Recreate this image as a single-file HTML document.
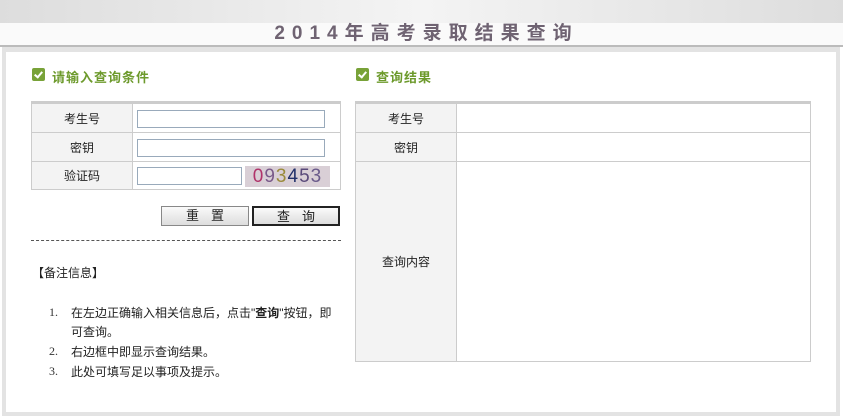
<!DOCTYPE html>
<html><head><meta charset="utf-8"><style>
*{margin:0;padding:0;box-sizing:border-box}
body{width:843px;height:418px;background:#fff;font-family:"Liberation Sans","Noto Sans CJK SC",sans-serif;font-size:12px;color:#222;position:relative;overflow:hidden}
.top{position:absolute;left:0;top:0;width:843px;height:23px;background:linear-gradient(to right,#ddd,#f4f4f4 50%,#ddd)}
.title{position:absolute;left:0;top:23px;width:843px;height:22px;background:#fafafa;text-align:center;font-size:19px;font-weight:bold;color:#6f6372;letter-spacing:7px;line-height:22px;padding-left:10px}
.line{position:absolute;left:0;top:45px;width:843px;height:2px;background:#bbb}
.frame{position:absolute;left:2px;top:47px;width:838px;height:369px;background:#e3e3e3}
.panel{position:absolute;left:6px;top:52px;width:830px;height:360px;background:#fff}
.h{position:absolute;font-size:13px;font-weight:bold;color:#6d9a2c;letter-spacing:1px}
.ck{position:absolute;width:13px;height:13px;background:#78a238;border-radius:2px}
.ck:after{content:"";position:absolute;left:4px;top:2px;width:3px;height:6px;border:solid #fff;border-width:0 2px 2px 0;transform:rotate(40deg)}
table{position:absolute;border-collapse:collapse;border-top:3px solid #ccc}
td{border:1px solid #ccc;text-align:center;font-size:12px}
td.l{background:#f3f3f3}
.in{position:absolute;height:18px;border:1px solid #9ab;background:#fff}
.btn{position:absolute;height:20px;border:1px solid #888;background:linear-gradient(#fafafa,#ddd);text-align:center;line-height:18px;font-size:13px;letter-spacing:12px;padding-left:12px}
.dash{position:absolute;left:31px;top:240px;width:310px;border-top:1px dashed #555}
.t{position:absolute;font-size:12px;white-space:nowrap}
.n{position:absolute;font-family:"Liberation Serif",serif;font-size:12px;color:#333}
</style></head><body>
<div class="top"></div>
<div class="title">2014年高考录取结果查询</div>
<div class="line"></div>
<div class="frame"></div>
<div class="panel"></div>
<div class="ck" style="left:32px;top:68px"></div><div class="h" style="left:52px;top:67px">请输入查询条件</div>
<div class="ck" style="left:356px;top:68px"></div><div class="h" style="left:376px;top:67px">查询结果</div>
<table style="left:31px;top:101px;width:310px"><tr style="height:30px"><td class="l" style="width:101px">考生号</td><td></td></tr><tr style="height:29px"><td class="l">密钥</td><td></td></tr><tr style="height:28px"><td class="l">验证码</td><td></td></tr></table>
<div class="in" style="left:137px;top:110px;width:188px"></div>
<div class="in" style="left:137px;top:139px;width:188px"></div>
<div class="in" style="left:137px;top:167px;width:105px"></div>
<div style="position:absolute;left:245px;top:166px;width:85px;height:21px;background:#d9cfd6;font-size:19px;line-height:21px;letter-spacing:1px;text-align:center;font-family:'Liberation Sans',sans-serif"><span style="color:#b0336a">0</span><span style="color:#7a5a8a">9</span><span style="color:#9a8a3a">3</span><span style="color:#22306a">4</span><span style="color:#5a4a7a">5</span><span style="color:#6a5a8a">3</span></div>
<div class="btn" style="left:161px;top:206px;width:88px">重置</div>
<div class="btn" style="left:252px;top:206px;width:88px;border:2px solid #222">查询</div>
<div class="dash"></div>
<div class="t" style="left:32px;top:264px">【备注信息】</div>
<div class="n" style="left:49px;top:305px">1.</div><div class="t" style="left:71px;top:304px">在左边正确输入相关信息后，点击"<b>查询</b>"按钮，即</div>
<div class="t" style="left:71px;top:323px">可查询。</div>
<div class="n" style="left:49px;top:344px">2.</div><div class="t" style="left:71px;top:343px">右边框中即显示查询结果。</div>
<div class="n" style="left:49px;top:364px">3.</div><div class="t" style="left:71px;top:363px">此处可填写足以事项及提示。</div>
<table style="left:355px;top:101px;width:456px"><tr style="height:30px"><td class="l" style="width:101px">考生号</td><td></td></tr><tr style="height:29px"><td class="l">密钥</td><td></td></tr><tr style="height:200px"><td class="l">查询内容</td><td></td></tr></table>
</body></html>
